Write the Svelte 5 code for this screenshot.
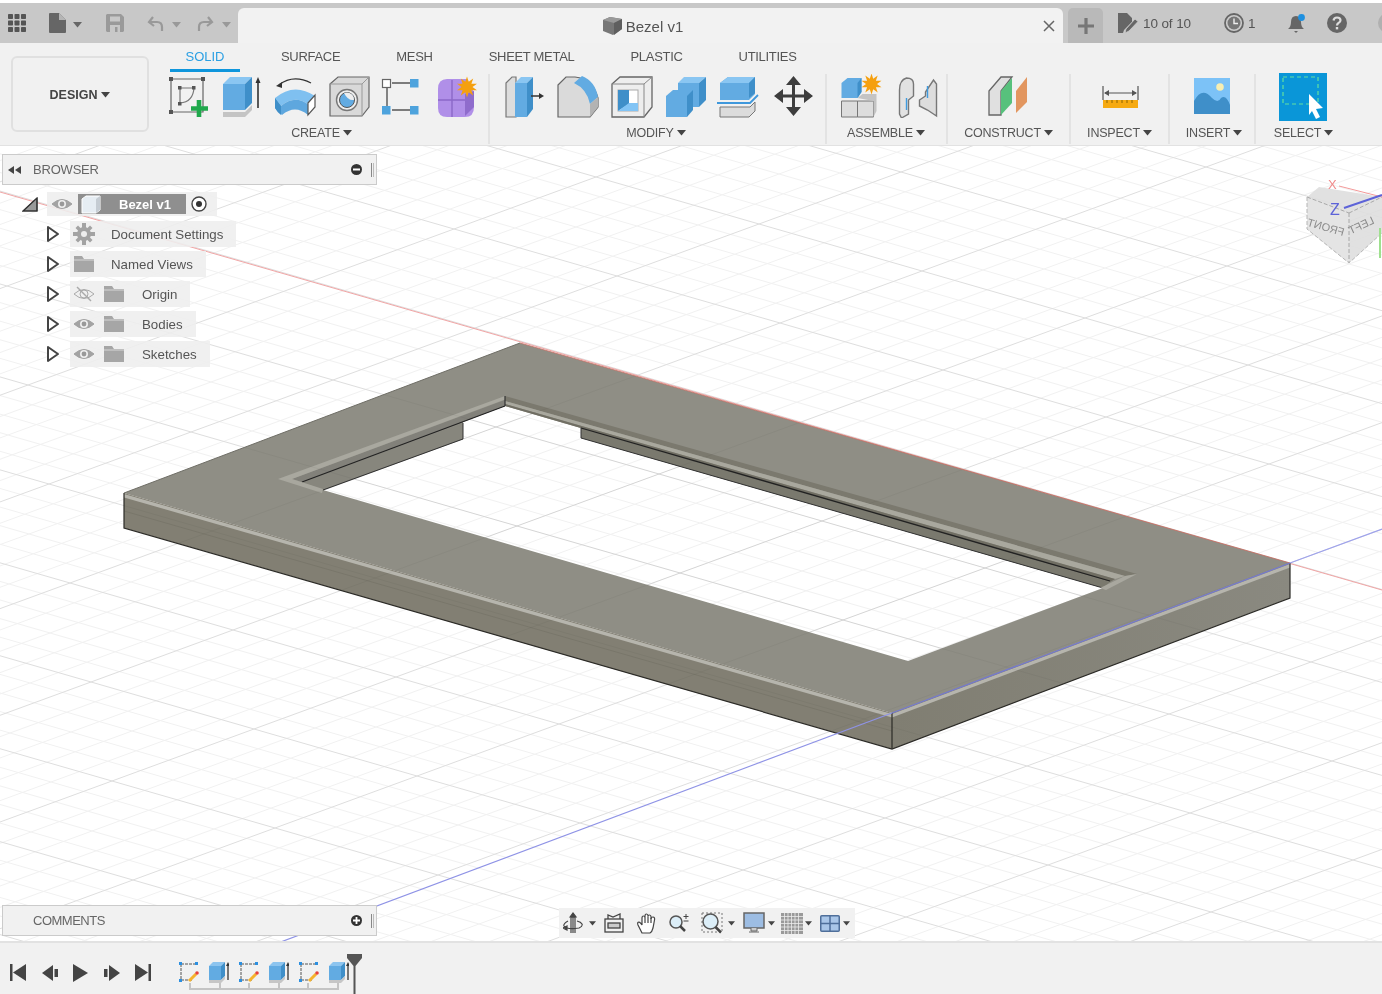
<script>
  const O = [1290, 562];
  const U = [32.6, 9.4];
  const V = [28.4, -10.4];
  function family(base, step) {
    const s = base[1] / base[0];
    const out = [];
    for (let k = -70; k <= 70; k++) {
      const px = O[0] + k * step[0];
      const py = O[1] + k * step[1];
      out.push({
        y1: py + (0 - px) * s,
        y2: py + (1382 - px) * s,
        major: k % 5 === 0
      });
    }
    return out;
  }
  const lines = [...family(U, V), ...family(V, U)];
  const minor = lines.filter((l) => !l.major);
  const major = lines.filter((l) => l.major);

  function star(cx, cy, r, n = 10) {
    const pts = [];
    for (let i = 0; i < n * 2; i++) {
      const a = (Math.PI * i) / n - Math.PI / 2;
      const q = i % 2 ? r * 0.52 : r;
      pts.push((cx + q * Math.cos(a)).toFixed(1) + ',' + (cy + q * Math.sin(a)).toFixed(1));
    }
    return pts.join(' ');
  }
  const holeW = 'M323 489L463 438L463 421L505 405L581 427L581 437L1103 587L908 660Z';
  const topFace = 'M124 492L520 342L1290 562L892 712Z' + holeW;
  const tree = [
    { label: 'Origin', hidden: true },
    { label: 'Bodies' },
    { label: 'Sketches' }
  ];
</script>

{#snippet caret()}
  <svg class="caret" width="9" height="6" viewBox="0 0 9 6"><path d="M0 0H9L4.5 5.5Z" /></svg>
{/snippet}
{#snippet expand()}
  <svg class="expand" width="14" height="18" viewBox="0 0 14 18"><path d="M2 2L12 9L2 16Z" fill="#fff" stroke="#444" stroke-width="2" stroke-linejoin="round" /></svg>
{/snippet}
{#snippet eye(off)}
  <svg width="22" height="16" viewBox="0 0 22 16">
    <path d="M1 8Q11 -1 21 8Q11 17 1 8Z" fill={off ? 'none' : '#a3a3a3'} stroke={off ? '#aaa' : '#a3a3a3'} />
    <circle cx="11" cy="8" r="4" fill={off ? 'none' : '#eee'} stroke={off ? '#aaa' : 'none'} />
    {#if off}<path d="M4 1L18 15" stroke="#aaa" stroke-width="1.4" />{:else}<circle cx="11" cy="8" r="2.4" fill="#999" />{/if}
  </svg>
{/snippet}
{#snippet folder()}
  <svg width="22" height="18" viewBox="0 0 22 18"><path d="M1 1H9L11 4H21V17H1Z" fill="#a6a6a6" /><path d="M1 5H21" stroke="#d6d6d6" /></svg>
{/snippet}
{#snippet mSketch()}
  <svg width="20" height="22" viewBox="0 0 20 22">
    <path d="M2 3H17M2 3V19H13" fill="none" stroke="#555" stroke-dasharray="3 1" />
    <rect x="0" y="1" width="3" height="3" fill="#2b8fe0" /><rect x="16" y="1" width="3" height="3" fill="#2b8fe0" /><rect x="0" y="18" width="3" height="3" fill="#2b8fe0" />
    <path d="M10 20L17 13" stroke="#f5b32e" stroke-width="3" /><circle cx="18" cy="12" r="1.8" fill="#e8413c" />
  </svg>
{/snippet}
{#snippet mExtrude()}
  <svg width="20" height="22" viewBox="0 0 20 22">
    <path d="M0 5H12V19H0Z" fill="#62abe2" /><path d="M0 5L4 1H16L12 5Z" fill="#8cc4ef" /><path d="M12 5L16 1V15L12 19Z" fill="#3f8fc9" />
    <path d="M0 19H12L16 15V18L12 22H0Z" fill="#c6c6c6" /><path d="M19 4V19" stroke="#333" stroke-width="1.3" /><path d="M17 5L19 1L21 5Z" fill="#333" />
  </svg>
{/snippet}

<div class="app">
  <header class="titlebar">
    <div class="qat">
      <svg class="i-apps" width="18" height="18" viewBox="0 0 18 18" fill="#555">
        <rect width="5" height="5" rx=".7" /><rect x="6.5" width="5" height="5" rx=".7" /><rect x="13" width="5" height="5" rx=".7" />
        <rect y="6.5" width="5" height="5" rx=".7" /><rect x="6.5" y="6.5" width="5" height="5" rx=".7" /><rect x="13" y="6.5" width="5" height="5" rx=".7" />
        <rect y="13" width="5" height="5" rx=".7" /><rect x="6.5" y="13" width="5" height="5" rx=".7" /><rect x="13" y="13" width="5" height="5" rx=".7" />
      </svg>
      <svg class="i-file" width="17" height="20" viewBox="0 0 17 20"><path d="M0 1Q0 0 1 0H10L17 7V19Q17 20 16 20H1Q0 20 0 19Z" fill="#666" /><path d="M10 0V7H17" fill="#b5b5b5" /></svg>
      <span class="carets">{@render caret()}</span>
      <svg class="i-save" width="18" height="18" viewBox="0 0 18 18"><path d="M1 0H15L18 3V17L17 18H1L0 17V1Z" fill="#9a9a9a" /><rect x="4" y="2.5" width="10" height="5" fill="#c8c8c8" /><rect x="4" y="11" width="10" height="7" fill="#c8c8c8" /><rect x="9" y="13" width="2.5" height="5" fill="#9a9a9a" /></svg>
      <svg class="i-undo" width="17" height="17" viewBox="0 0 17 17"><path d="M6 2L2 7L7 11M2 7H10Q15 7 15 12V16" fill="none" stroke="#999" stroke-width="2.2" /></svg>
      <span class="carets c-light">{@render caret()}</span>
      <svg class="i-redo" width="17" height="17" viewBox="0 0 17 17"><path d="M11 2L15 7L10 11M15 7H7Q2 7 2 12V16" fill="none" stroke="#999" stroke-width="2.2" /></svg>
      <span class="carets c-light">{@render caret()}</span>
    </div>
    <div class="doc-tab">
      <div class="doc-name">
        <svg width="21" height="20" viewBox="0 0 21 20"><path d="M1 4L8 1L20 3V13L11 19L1 15Z" fill="#777" /><path d="M1 4L12 7L20 3L8 1Z" fill="#999" /><path d="M12 7V19L20 13V3Z" fill="#5f5f5f" /></svg>
        <span>Bezel v1</span>
      </div>
      <svg class="close" width="12" height="12" viewBox="0 0 12 12"><path d="M1 1L11 11M11 1L1 11" stroke="#666" stroke-width="1.5" /></svg>
    </div>
    <div class="plus-tab"><svg width="16" height="16" viewBox="0 0 16 16"><path d="M8 0V16M0 8H16" stroke="#777" stroke-width="3.2" /></svg></div>
    <div class="status">
      <svg class="s-job" width="20" height="20" viewBox="0 0 20 20"><path d="M0 0H9L14 5V9L6 17L5 20H0Z" fill="#666" /><path d="M8 16L17 6L20 8.5L11 18L7 20Z" fill="#666" stroke="#ccc" stroke-width=".8" /></svg>
      <span class="s-count">10 of 10</span>
      <svg class="s-clock" width="20" height="20" viewBox="0 0 20 20"><circle cx="10" cy="10" r="9" fill="#ccc" stroke="#666" stroke-width="1.8" /><circle cx="10" cy="10" r="6.5" fill="#777" /><path d="M10 5.5V10.5H14" fill="none" stroke="#eee" stroke-width="1.4" /></svg>
      <span class="s-one">1</span>
      <svg class="s-bell" width="20" height="21" viewBox="0 0 20 21"><path d="M1 16Q4 14 4 9Q4 3 9 3Q14 3 14 9Q14 14 17 16Z" fill="#666" /><path d="M7 18H11L9 20Z" fill="#666" /><circle cx="14.5" cy="4.5" r="3.4" fill="#1e90e0" /></svg>
      <svg class="s-help" width="20" height="20" viewBox="0 0 20 20"><circle cx="10" cy="10" r="10" fill="#666" /><path d="M6.5 7.5Q7 4.5 10 4.5Q13.5 4.5 13.5 7.3Q13.5 9 11.5 10Q10 10.8 10 12.5" fill="none" stroke="#ddd" stroke-width="2.2" /><rect x="8.8" y="14" width="2.4" height="2.4" fill="#ddd" /></svg>
      <span class="avatar"></span>
    </div>
  </header>

  <section class="ribbon">
    <button class="design"><span>DESIGN</span> {@render caret()}</button>
    <div class="ribbon-main">
      <nav class="tabs">
        <span class="tab active">SOLID</span>
        <span class="tab">SURFACE</span>
        <span class="tab">MESH</span>
        <span class="tab">SHEET METAL</span>
        <span class="tab">PLASTIC</span>
        <span class="tab">UTILITIES</span>
      </nav>
      <div class="groups">
        <div class="group g-create">
          <div class="tools">
            <svg class="tool" viewBox="0 0 44 44">
              <path d="M6 5H38V38H6Z" fill="none" stroke="#666" stroke-width="1.2" />
              <path d="M15 14H29M15 14V29M15 29Q28 28 29 14" fill="none" stroke="#777" stroke-width="1.2" />
              <g fill="#555"><rect x="4" y="3" width="4" height="4" /><rect x="36" y="3" width="4" height="4" /><rect x="4" y="36" width="4" height="4" /><rect x="13" y="12" width="3.5" height="3.5" /><rect x="27" y="12" width="3.5" height="3.5" /><rect x="13" y="28" width="3.5" height="3.5" /></g>
              <path d="M34 26V43M26 34.5H43" stroke="#1fa84c" stroke-width="4.6" />
            </svg>
            <svg class="tool" viewBox="0 0 44 44">
              <path d="M4 10H26V36H4Z" fill="#62abe2" /><path d="M4 10L11 3H33L26 10Z" fill="#8ac6f2" /><path d="M26 10L33 3V29L26 36Z" fill="#3f8fc9" />
              <path d="M4 38H26L33 31V36L26 43H4Z" fill="#c4c4c4" /><path d="M39 8V34" stroke="#333" stroke-width="1.6" /><path d="M36.5 9L39 3L41.5 9Z" fill="#333" />
            </svg>
            <svg class="tool" viewBox="0 0 44 44">
              <path d="M6 11Q20 0 38 9" fill="none" stroke="#333" stroke-width="1.3" /><path d="M3 12L9 8V14Z" fill="#333" />
              <path d="M2 24Q21 8 42 22L36 31Q22 20 8 32Z" fill="#7fc0f0" /><path d="M2 24V34Q5 38 9 41Q22 30 35 41L36 31Q22 20 8 32Z" fill="#5ea7de" /><path d="M2 24L8 32V41Q4 38 2 34Z" fill="#3f8fc9" />
              <path d="M35 29L42 21V33L35 41Z" fill="#fff" stroke="#555" stroke-width="1.2" />
            </svg>
            <svg class="tool" viewBox="0 0 44 44">
              <path d="M3 10L11 3H42V33L35 42H3Z" fill="#d9d9d9" stroke="#666" stroke-width="1.2" /><path d="M3 10H35V42M35 10L42 3" fill="none" stroke="#999" />
              <circle cx="20" cy="26" r="10.5" fill="#eee" stroke="#777" stroke-width="1.4" /><circle cx="20" cy="26" r="7.5" fill="#62abe2" stroke="#555" /><path d="M17 19Q21 27 27 26Q27 19 20 18.5Z" fill="#eee" />
            </svg>
            <svg class="tool" viewBox="0 0 44 44">
              <path d="M11 9H30M6 14V32M11 36H30" stroke="#555" stroke-width="1.4" />
              <rect x="1.500" y="5.500" width="8" height="8" fill="#fff" stroke="#666" stroke-width="1.200" /><rect x="29" y="5" width="8.500" height="8.500" fill="#4ea3dd" /><rect x="1" y="32" width="8.500" height="8.500" fill="#4ea3dd" /><rect x="29" y="32" width="8.500" height="8.500" fill="#4ea3dd" />
            </svg>
            <svg class="tool" viewBox="0 0 44 44">
              <path d="M3 15Q3 5 12 5H32L39 18V33Q39 43 30 43H12Q3 43 3 34Z" fill="#b08fe8" /><path d="M3 26H30M17 6V43" stroke="#8b68c8" stroke-width="1.400" /><path d="M30 20L39 17V33L30 42Z" fill="#8f6ccc" />
              <polygon points={star(32, 13, 10.5)} fill="#f5a00f" />
            </svg>
          </div>
          <div class="glabel">CREATE {@render caret()}</div>
        </div>
        <div class="group g-modify">
          <div class="tools">
            <svg class="tool" viewBox="0 0 44 44"><path d="M5 9L11 3H15V43H5Z" fill="#ddd" stroke="#777" stroke-width="1.2" /><path d="M14 9H26V43H14Z" fill="#62abe2" /><path d="M14 9L20 3H32L26 9Z" fill="#8ac6f2" /><path d="M26 9L32 3V35L26 43Z" fill="#3f8fc9" /><path d="M30 22H40" stroke="#333" stroke-width="1.5" /><path d="M38 19L43 22L38 25Z" fill="#333" /></svg>
            <svg class="tool" viewBox="0 0 44 44"><path d="M3 11L11 3H20Q38 5 43 24V33L35 43H3Z" fill="#dadada" stroke="#666" stroke-width="1.2" /><path d="M19 9L27 2Q40 7 43 23L35 30Q32 15 19 9Z" fill="#62abe2" /><path d="M35 30L43 23V33L35 43Z" fill="#b3b3b3" /></svg>
            <svg class="tool" viewBox="0 0 44 44"><path d="M3 10L11 3H43V33L35 43H3Z" fill="#eee" stroke="#666" stroke-width="1.3" /><path d="M3 10H35V43M35 10L43 3" fill="none" stroke="#888" /><rect x="9" y="16" width="20" height="21" fill="#fff" stroke="#aaa" /><path d="M9 16H20V30L9 37Z" fill="#3f8fc9" /><path d="M9 37L20 29H29V37Z" fill="#82c4f5" /></svg>
            <svg class="tool" viewBox="0 0 44 44"><path d="M15 9H36V33H15Z" fill="#62abe2" /><path d="M15 9L21 3H43L36 9Z" fill="#8ac6f2" /><path d="M36 9L43 3V26L36 33Z" fill="#3f8fc9" /><path d="M3 22H24V43H3Z" fill="#62abe2" /><path d="M3 22L10 16H30L24 22Z" fill="#62abe2" /><path d="M24 22L30 16V36L24 43Z" fill="#3f8fc9" /></svg>
            <svg class="tool" viewBox="0 0 44 44"><path d="M3 9L11 3H38V20L32 26H3Z" fill="#62abe2" /><path d="M3 9L11 3H38L32 9Z" fill="#8ac6f2" /><path d="M32 9L38 3V19L32 24Z" fill="#3f8fc9" /><path d="M0 29H33L41 21" fill="none" stroke="#3f98dc" stroke-width="1.8" /><path d="M3 33H33L38 28V37L32 43H3Z" fill="#dcdcdc" stroke="#777" /></svg>
            <svg class="tool" viewBox="0 0 44 44" fill="#3d3d3d"><path d="M21 6H24V38H21ZM6 20.500H38V23.500H6Z" /><path d="M22.500 2L30 11H15ZM22.500 42L15 33H30ZM3 22L12 15V29ZM42 22L33 15V29Z" /></svg>
          </div>
          <div class="glabel">MODIFY {@render caret()}</div>
        </div>
        <div class="group g-assemble">
          <div class="tools">
            <svg class="tool" viewBox="0 0 44 44"><path d="M3 27H19V43H3ZM19 27H35V43H19Z" fill="#ddd" stroke="#777" /><path d="M19 24L24 20H38V37L35 43V27Z" fill="#c4c4c4" /><path d="M3 9L9 4H23V18L19 24H3Z" fill="#62abe2" /><path d="M19 9V24L23 18V4Z" fill="#3f8fc9" /><polygon points={star(33, 10, 10.5)} fill="#f5a00f" /></svg>
            <svg class="tool" viewBox="0 0 44 44"><path d="M4 16Q4 6 11 4Q18 4 18 10V22L13 26V40L6 44L4 40Z" fill="#e2e2e2" stroke="#777" stroke-width="1.400" /><path d="M24 26L30 22V18L38 6L41 10V42L32 36L24 32Z" fill="#ddd" stroke="#777" stroke-width="1.400" /><path d="M11 24V36M32 12V24" stroke="#3f9bdf" stroke-width="1.400" /></svg>
          </div>
          <div class="glabel">ASSEMBLE {@render caret()}</div>
        </div>
        <div class="group g-construct">
          <div class="tools">
            <svg class="tool" viewBox="0 0 44 44"><path d="M2 17L14 3H25L14 17V41H2Z" fill="#e0e0e0" stroke="#666" stroke-width="1.300" /><path d="M14 17L25 4V29L14 41Z" fill="#57c17c" /><path d="M29 17L40 3V28L29 39Z" fill="#e2965f" /></svg>
          </div>
          <div class="glabel">CONSTRUCT {@render caret()}</div>
        </div>
        <div class="group g-inspect">
          <div class="tools">
            <svg class="tool" viewBox="0 0 44 44"><path d="M4 12V26M39 12V26M6 19H37" stroke="#555" stroke-width="1.2" /><path d="M5 19L10 16V22ZM38 19L33 16V22Z" fill="#555" /><rect x="4" y="26" width="35" height="8" fill="#f6aa12" /><path d="M8 26V29M13 26V29M18 26V29M23 26V29M28 26V29M33 26V29" stroke="#8a6200" /></svg>
          </div>
          <div class="glabel">INSPECT {@render caret()}</div>
        </div>
        <div class="group g-insert">
          <div class="tools">
            <svg class="tool" viewBox="0 0 44 44"><rect x="4" y="4" width="36" height="36" fill="#7cc2f7" /><path d="M4 27Q12 12 22 24Q28 30 31 24Q36 20 40 31V40H4Z" fill="#3f8fc9" /><circle cx="30" cy="13" r="3.800" fill="#f7eeb2" /></svg>
          </div>
          <div class="glabel">INSERT {@render caret()}</div>
        </div>
        <div class="group g-select">
          <div class="tools">
            <div class="select-tile">
              <svg width="48" height="48" viewBox="0 0 48 48"><rect width="48" height="48" fill="#0a96d8" /><rect x="4" y="4" width="35" height="27" fill="none" stroke="#63dfa0" stroke-width="1.200" stroke-dasharray="4 3" /><path d="M30 21L44 35L37 36L41 44L37 46L33 38L30 42Z" fill="#fff" /></svg>
            </div>
          </div>
          <div class="glabel">SELECT {@render caret()}</div>
        </div>
      </div>
    </div>
  </section>

  <main class="viewport">
    <svg class="scene" viewBox="0 145 1382 796" width="1382" height="796">
      <defs>
        <clipPath id="model"><path d="M124 492L520 342L1290 562L1290 597L892 748L124 527Z" /></clipPath>
        <linearGradient id="rightFace" x1="0" x2="1" y1="0" y2="0"><stop offset="0" stop-color="#807e72" /><stop offset="1" stop-color="#8a8980" /></linearGradient>
      </defs>
      <g stroke="#f1f1f1" stroke-width="1">
        {#each minor as l}<line x1="0" y1={l.y1} x2="1382" y2={l.y2} />{/each}
      </g>
      <g stroke="#dedede" stroke-width="1">
        {#each major as l}<line x1="0" y1={l.y1} x2="1382" y2={l.y2} />{/each}
      </g>
      <line x1="0" y1="191" x2="1382" y2="589" stroke="#f1a5a5" stroke-width="1" />

      <path d={topFace} fill="#8f8e85" fill-rule="evenodd" />
      <path d="M124 492L892 712V748L124 527Z" fill="#827f73" />
      <path d="M892 712L1290 562V597L892 748Z" fill="url(#rightFace)" />
      <path d="M124 510L892 730" stroke="#706e62" stroke-width="1" opacity=".5" />
      <path d="M124 493L892 713V716.500L124 496.500Z" fill="#b6b5ad" />
      <path d="M892 713L1290 563V566.500L892 716.500Z" fill="#b6b5ad" />

      <path d="M292 478L505 399V405L302 481Z" fill="#82817a" />
      <path d="M302 481L463 422V438L323 489Z" fill="#87867d" />
      <path d="M463 422V438L323 489" fill="none" stroke="#333" stroke-width="1" />
      <path d="M302 481L505 405" stroke="#222" stroke-width="1.200" />
      <path d="M278 478L505 395V398.500L292 478Z" fill="#a9a89f" />
      <path d="M278 478L292 478L323 488L322 492Z" fill="#a8a79e" />

      <path d="M505 395L1137 573L1125 575L505 400Z" fill="#7b796e" />
      <path d="M505 400L1125 575L1115 578L505 403Z" fill="#a9a89e" />
      <path d="M505 403L1115 578L1110 581L505 405Z" fill="#706e63" />
      <path d="M581 427V437L1103 587L1110 581Z" fill="#7a796e" />
      <path d="M581 427L1110 580" stroke="#222" stroke-width="1.300" />
      <path d="M581 427V437L1103 587" fill="none" stroke="#333" stroke-width="1" />
      <path d="M1137 573L1125 575L1100 587L1106 589Z" fill="#a9a89f" />
      <path d="M505 395V405" stroke="#333" stroke-width="1.200" />

      <g clip-path="url(#model)" stroke="#000" stroke-opacity=".04" stroke-width="1">
        {#each major as l}<line x1="0" y1={l.y1} x2="1382" y2={l.y2} />{/each}
      </g>

      <path d="M124 492V527L892 748L1290 597V562" fill="none" stroke="#2b2a26" stroke-width="1.200" />
      <path d="M892 712V748" stroke="#2b2a26" stroke-width="1.200" />
      <path d="M124 492L520 342" stroke="#6f6e66" stroke-width="1" />
      <path d="M520 342L1290 562" stroke="#c46e62" stroke-width="1" opacity=".8" />
      <line x1="892" y1="712" x2="270" y2="945" stroke="#8f93e6" stroke-width="1.200" />
      <line x1="892" y1="712" x2="1290" y2="562" stroke="#7378cf" stroke-width="1.200" />
      <line x1="1290" y1="562" x2="1382" y2="528" stroke="#9ea2ec" stroke-width="1.200" />

      <g class="viewcube">
        <path d="M1307 196L1319 186L1382 196V232L1349 262L1307 228Z" fill="#dedede" opacity=".9" />
        <path d="M1307 196L1349 212V262L1307 228Z" fill="#e4e4e4" />
        <path d="M1349 212L1382 196M1349 212V262M1307 196L1349 212" fill="none" stroke="#a8a8a8" stroke-dasharray="4 2" />
        <path d="M1307 196V228L1349 262L1382 232" fill="none" stroke="#b5b5b5" stroke-dasharray="4 2" />
        <text class="vc-text" transform="translate(1343 235) rotate(16) scale(-1 1)" x="0" y="0">FRONT</text>
        <text class="vc-text" transform="translate(1375 222) rotate(-25) scale(-1 1)" x="0" y="0">LEFT</text>
        <path d="M1339 185L1382 196" stroke="#f39a9a" />
        <path d="M1344 207L1382 194" stroke="#5d63d8" stroke-width="2" />
        <path d="M1380 227V257" stroke="#9fe08f" stroke-width="2" />
        <text class="vc-x" x="1328" y="188">X</text>
        <text class="vc-z" x="1330" y="214">Z</text>
      </g>
    </svg>

    <div class="panel browser">
      <svg class="rew" width="13" height="8" viewBox="0 0 13 8" fill="#444"><path d="M6 0V8L0 4ZM13 0V8L7 4Z" /></svg>
      <span class="panel-title">BROWSER</span>
      <svg class="pin" width="11" height="11" viewBox="0 0 11 11"><circle cx="5.500" cy="5.500" r="5.500" fill="#333" /><rect x="2" y="4.500" width="7" height="2" fill="#fff" /></svg>
      <span class="grip"></span>
    </div>

    <div class="tree">
      <div class="row root">
        <svg class="collapse" width="16" height="15" viewBox="0 0 16 15"><path d="M1 14L15 1V14Z" fill="#999" stroke="#333" stroke-width="1.300" /><path d="M1 14L15 1V14" fill="none" stroke="#333" /></svg>
        <div class="chip root-chip">
          <span class="eye-slot">{@render eye(false)}</span>
          <div class="comp">
            <svg width="20" height="19" viewBox="0 0 20 19"><path d="M1 4L5 1H19V15L15 18H1Z" fill="#e6edf3" stroke="#fff" /><path d="M15 4V18L19 15V1Z" fill="#c5ccd3" /></svg>
            <span>Bezel v1</span>
          </div>
          <svg class="radio" width="16" height="16" viewBox="0 0 16 16"><circle cx="8" cy="8" r="7" fill="#fff" stroke="#444" stroke-width="1.400" /><circle cx="8" cy="8" r="3" fill="#333" /></svg>
        </div>
      </div>
      <div class="row">
        {@render expand()}
        <div class="chip wide">
          <svg width="22" height="22" viewBox="0 0 22 22"><g fill="#a3a3a3"><circle cx="11" cy="11" r="7" /><path d="M9 0H13V5H9ZM9 17H13V22H9ZM0 9H5V13H0ZM17 9H22V13H17ZM2.500 5L5 2.500L8 5.500L5.500 8ZM17 2.500L19.500 5L16.500 8L14 5.500ZM2.500 17L5.500 14L8 16.500L5 19.500ZM14 16.500L16.500 14L19.500 17L17 19.500Z" /></g><circle cx="11" cy="11" r="3" fill="#eee" /></svg>
          <span class="t1">Document Settings</span>
        </div>
      </div>
      <div class="row">
        {@render expand()}
        <div class="chip named">
          {@render folder()}
          <span class="t1">Named Views</span>
        </div>
      </div>
      {#each tree as item}
        <div class="row">
          {@render expand()}
          <div class="chip">
            <span class="eye2">{@render eye(item.hidden)}</span>
            {@render folder()}
            <span class="t2">{item.label}</span>
          </div>
        </div>
      {/each}
    </div>

    <div class="panel comments">
      <span class="panel-title">COMMENTS</span>
      <svg class="pin" width="11" height="11" viewBox="0 0 11 11"><circle cx="5.500" cy="5.500" r="5.500" fill="#333" /><path d="M2 5.500H9M5.500 2V9" stroke="#fff" stroke-width="1.800" /></svg>
      <span class="grip"></span>
    </div>

    <div class="navbar">
      <svg class="n1" width="20" height="22" viewBox="0 0 20 22" fill="none" stroke="#444" stroke-width="1.200"><path d="M10 2V21M8 21V5H12V21" /><path d="M7 5L10 1L13 5Z" fill="#444" /><path d="M5 9Q0 12 1 14Q4 18 16 16Q20 14 19 12Q18 10 14 9" /><path d="M4 14L0 16L4 18Z" fill="#444" /></svg>
      <span class="nc c1">{@render caret()}</span>
      <svg class="n2" width="20" height="20" viewBox="0 0 20 20" fill="none" stroke="#444" stroke-width="1.300"><rect x="1" y="6" width="18" height="13" /><rect x="4" y="10" width="12" height="5" fill="#ccc" /><path d="M4 6V2L9 4L16 1V6" /></svg>
      <svg class="n3" width="20" height="21" viewBox="0 0 20 21" fill="#fff" stroke="#444" stroke-width="1.200"><path d="M5 20Q3 16 1 12Q0 9 2 9Q4 10 5 12V5Q5 3 6.500 3Q8 3 8 5V3Q8 1 9.500 1Q11 1 11 3V3.500Q11 2 12.500 2Q14 2 14 4V6Q14 4 16 4Q18 4 17.500 7L16 15Q15 19 13 20Z" /><path d="M8 5V10M11 3.500V10M14 5V10" /></svg>
      <svg class="n4" width="22" height="20" viewBox="0 0 22 20"><circle cx="8" cy="9" r="6" fill="#dceef8" stroke="#555" stroke-width="1.500" /><path d="M12 13L17 18" stroke="#444" stroke-width="2.500" /><path d="M18 1V6M15.500 3.500H20.500M15.500 8H20.500" stroke="#444" /></svg>
      <svg class="n5" width="22" height="22" viewBox="0 0 22 22"><rect x="1" y="1" width="20" height="19" fill="none" stroke="#777" stroke-dasharray="2 2" /><circle cx="9.500" cy="9.500" r="7.500" fill="#dceef8" stroke="#555" stroke-width="1.500" /><path d="M14.500 15L20 20.500" stroke="#444" stroke-width="2.500" /></svg>
      <span class="nc c2">{@render caret()}</span>
      <svg class="n6" width="22" height="22" viewBox="0 0 22 22"><rect x="1" y="1" width="20" height="15" fill="#9dbde3" stroke="#666" stroke-width="1.500" /><path d="M8 16V19H14V16M6 20H16" stroke="#666" fill="#ccc" /></svg>
      <span class="nc c3">{@render caret()}</span>
      <svg class="n7" width="22" height="21" viewBox="0 0 22 21"><rect width="22" height="21" fill="#9a9a9a" /><path d="M3.500 0V21M7 0V21M10.500 0V21M14 0V21M17.500 0V21M0 3.500H22M0 7H22M0 10.500H22M0 14H22M0 17.500H22" stroke="#ececec" stroke-width=".8" /></svg>
      <span class="nc c4">{@render caret()}</span>
      <svg class="n8" width="20" height="17" viewBox="0 0 20 17"><rect x=".75" y=".75" width="18.500" height="15.500" rx="1" fill="#a9c6e8" stroke="#4f6f9a" stroke-width="1.500" /><path d="M10 0V17M0 8.500H20" stroke="#4f6f9a" stroke-width="1.500" /></svg>
      <span class="nc c3">{@render caret()}</span>
    </div>
  </main>

  <footer class="timeline">
    <div class="transport">
      <svg width="16" height="17" viewBox="0 0 16 17" fill="#444"><rect width="2.500" height="17" /><path d="M16 0V17L3 8.500Z" /></svg>
      <svg width="16" height="16" viewBox="0 0 16 16" fill="#444"><path d="M11 0V16L0 8Z" /><rect x="12.500" y="4" width="3.500" height="8" /></svg>
      <svg width="15" height="18" viewBox="0 0 15 18" fill="#444"><path d="M0 0L15 9L0 18Z" /></svg>
      <svg width="16" height="16" viewBox="0 0 16 16" fill="#444"><path d="M5 0V16L16 8Z" /><rect y="4" width="3.500" height="8" /></svg>
      <svg width="16" height="17" viewBox="0 0 16 17" fill="#444"><path d="M0 0V17L13 8.500Z" /><rect x="13.500" width="2.500" height="17" /></svg>
    </div>
    <div class="features">
      <div class="feature-icons">
        {@render mSketch()}
        {@render mExtrude()}
        {@render mSketch()}
        {@render mExtrude()}
        {@render mSketch()}
        {@render mExtrude()}
      </div>
      <div class="bracket">
        <span></span><span></span><span></span><span></span><span></span>
      </div>
    </div>
    <div class="marker">
      <svg width="15" height="40" viewBox="0 0 15 40"><path d="M0 0H15V4L8.500 12V40H6.500V12L0 4Z" fill="#555" /></svg>
    </div>
  </footer>
</div>

<style>
  :global(body) { margin: 0; background: #fff; }
  .app {
    width: 1382px;
    height: 994px;
    display: flex;
    flex-direction: column;
    overflow: hidden;
    font-family: "Liberation Sans", Arial, sans-serif;
    color: #555;
    filter: blur(0.35px);
  }
  svg { display: block; flex: none; }

  .titlebar {
    height: 40px;
    margin-top: 3px;
    padding-top: 5px;
    box-sizing: border-box;
    background: #c8c8c8;
    display: flex;
    align-items: stretch;
    flex: none;
  }
  .qat { width: 238px; display: flex; align-items: center; padding-bottom: 5px; box-sizing: border-box; flex: none; }
  .i-apps { margin-left: 8px; }
  .i-file { margin-left: 23px; }
  .carets { margin-left: 7px; fill: #666; display: block; }
  .c-light { fill: #999; margin-left: 8px; }
  .i-save { margin-left: 24px; }
  .i-undo { margin-left: 23px; }
  .i-redo { margin-left: 16px; }
  .caret { display: inline-block; fill: inherit; }
  .doc-tab {
    width: 825px;
    background: #f2f2f2;
    border-radius: 6px 6px 0 0;
    display: flex;
    align-items: center;
    justify-content: center;
    position: relative;
    flex: none;
  }
  .doc-name { display: flex; align-items: center; gap: 3px; font-size: 15px; margin-left: -16px; margin-top: 1px; }
  .close { position: absolute; right: 8px; top: 12px; }
  .plus-tab {
    width: 35px;
    margin-left: 5px;
    background: #b9b9b9;
    border-radius: 5px 5px 0 0;
    display: flex;
    align-items: center;
    justify-content: center;
    flex: none;
  }
  .status { display: flex; align-items: center; flex: 1; min-width: 0; padding-bottom: 5px; box-sizing: border-box; font-size: 13.500px; color: #555; white-space: nowrap; }
  .s-job { margin-left: 15px; }
  .s-count { margin-left: 5px; width: 81px; flex: none; letter-spacing: -0.1px; }
  .s-one { margin-left: 4px; width: 39px; flex: none; }
  .s-help { margin-left: 20px; }
  .avatar { margin-left: 31px; width: 20px; height: 20px; border-radius: 50%; background: #b0b0b0; flex: none; }

  .ribbon {
    height: 103px;
    flex: none;
    background: #f1f1f1;
    border-bottom: 1px solid #e2e2e2;
    box-sizing: border-box;
    display: flex;
    position: relative;
    z-index: 1;
  }
  .design {
    width: 138px;
    height: 76px;
    margin: 13px 11px 0;
    background: #f1f1f1;
    border: 2px solid #e0e0e0;
    border-radius: 6px;
    font: bold 12.500px "Liberation Sans", Arial, sans-serif;
    color: #444;
    fill: #444;
    flex: none;
    display: flex;
    align-items: center;
    justify-content: center;
    gap: 4px;
    padding: 1px 0 0;
    box-sizing: border-box;
  }
  .ribbon-main { flex: 1; min-width: 0; display: flex; flex-direction: column; }
  .tabs { display: flex; gap: 26px; padding-left: 10px; height: 29px; font-size: 13px; flex: none; }
  .tab { padding: 6px 15px 0; height: 23px; white-space: nowrap; letter-spacing: -0.3px; box-sizing: border-box; }
  .tab.active { width: 70px; padding: 6px 0 0; text-align: center; letter-spacing: 0; color: #2a9fe3; font-weight: 500; height: 29px; border-bottom: 3px solid #0f96dc; }
  .groups { display: flex; flex: 1; }
  .group { display: flex; flex-direction: column; align-items: center; box-sizing: border-box; border-right: 2px solid #e3e3e3; height: 70px; margin-top: 2px; flex: none; }
  .tools { display: flex; height: 46px; justify-content: center; }
  .tool { width: 44px; height: 44px; padding: 0 5px; box-sizing: content-box; }
  .glabel { font-size: 12.500px; letter-spacing: -0.2px; display: flex; align-items: center; gap: 3px; margin-top: 6px; fill: #444; white-space: nowrap; }
  .g-create { width: 330px; padding-right: 5px; }
  .g-modify { width: 337px; padding-left: 6px; padding-right: 5px; }
  .g-modify .glabel { margin-left: -4px; }
  .g-assemble { width: 121px; padding-left: 4px; }
  .g-assemble .tool { padding: 0 6.500px; }
  .g-assemble .glabel { margin-left: -5px; }
  .g-construct { width: 123px; }
  .g-inspect { width: 99px; }
  .g-inspect .tools { margin-left: 2px; }
  .g-insert { width: 86px; }
  .g-insert .glabel { margin-left: 4px; }
  .g-select { width: 95px; border-right: 0; }
  .select-tile { margin-top: -1px; margin-left: -2px; }

  .viewport { flex: 1; position: relative; overflow: hidden; background: #fff; }
  .scene { position: absolute; left: 0; top: 0; }
  .viewcube { filter: blur(0.5px); }
  .vc-text { font: 11px "Liberation Sans", Arial, sans-serif; fill: #8a8a8a; }
  .vc-x { font: 13px "Liberation Sans", Arial, sans-serif; fill: #f08a8a; }
  .vc-z { font: 16px "Liberation Sans", Arial, sans-serif; fill: #5d63d8; }

  .panel {
    position: absolute;
    left: 2px;
    width: 375px;
    height: 31px;
    background: #f1f1f1;
    border: 1px solid #cbcbcb;
    box-sizing: border-box;
    display: flex;
    align-items: center;
    font-size: 13px;
    color: #666;
  }
  .browser { top: 8px; }
  .comments { top: 759px; padding-left: 30px; }
  .rew { margin-left: 5px; margin-right: 12px; }
  .panel-title { flex: 1; letter-spacing: -0.2px; }
  .comments .panel-title { letter-spacing: -0.5px; }
  .pin { margin-right: 9px; }
  .grip { width: 3px; height: 14px; border-left: 1px solid #888; border-right: 1px solid #bbb; margin-right: 2px; box-sizing: border-box; }

  .tree { position: absolute; left: 0; top: 45px; display: flex; flex-direction: column; gap: 4px; font-size: 13.300px; color: #555; }
  .row { display: flex; align-items: center; height: 26px; padding-left: 46px; }
  .row.root { padding-left: 22px; }
  .collapse { margin-right: 9px; }
  .chip {
    display: flex;
    align-items: center;
    height: 26px;
    padding: 0 13px 0 3px;
    margin-left: 10px;
    background: rgba(238, 238, 238, 0.88);
    white-space: nowrap;
  }
  .root-chip { margin-left: 0; padding: 0 10px 0 4px; height: 24px; }
  .comp { display: flex; align-items: center; width: 108px; height: 20px; background: #8f8f8f; color: #fff; font-weight: bold; font-size: 13px; padding-left: 3px; box-sizing: border-box; margin-left: 5px; margin-right: 5px; }
  .comp span { margin-left: 18px; }
  .eye-slot { display: block; }
  .eye2 { margin-right: 8px; }
  .t1 { margin-left: 16px; }
  .t2 { margin-left: 17px; }

  .navbar {
    position: absolute;
    left: 559px;
    top: 762px;
    width: 296px;
    height: 30px;
    background: #f1f1f1;
    display: flex;
    align-items: center;
    fill: #444;
  }
  .n1 { margin-left: 4px; }
  .nc { display: block; }
  .nc .caret { width: 7px; height: 5px; display: block; }
  .c1 { margin-left: 6px; }
  .c2 { margin-left: 5px; }
  .c3 { margin-left: 3px; }
  .c4 { margin-left: 2px; }
  .n2 { margin-left: 8px; }
  .n3 { margin-left: 13px; }
  .n4 { margin-left: 11px; }
  .n5 { margin-left: 11px; }
  .n6 { margin-left: 8px; }
  .n7 { margin-left: 6px; }
  .n8 { margin-left: 8px; }

  .timeline {
    height: 53px;
    flex: none;
    background: #f1f1f1;
    border-top: 2px solid #e2e2e2;
    box-sizing: border-box;
    display: flex;
    position: relative;
  }
  .transport { display: flex; align-items: center; gap: 15.500px; padding-left: 10px; height: 47px; margin-top: 6px; width: 169px; box-sizing: border-box; flex: none; }
  .features { margin-left: 10px; padding-top: 18px; width: 170px; flex: none; }
  .feature-icons { display: flex; gap: 10px; }
  .bracket { display: flex; margin-left: 10px; height: 7px; width: 150px; border-bottom: 2px solid #c4c4c4; border-left: 2px solid #c4c4c4; box-sizing: border-box; }
  .bracket span { flex: 1; border-right: 2px solid #c4c4c4; }
  .marker { margin-left: -2px; padding-top: 11px; }
</style>
